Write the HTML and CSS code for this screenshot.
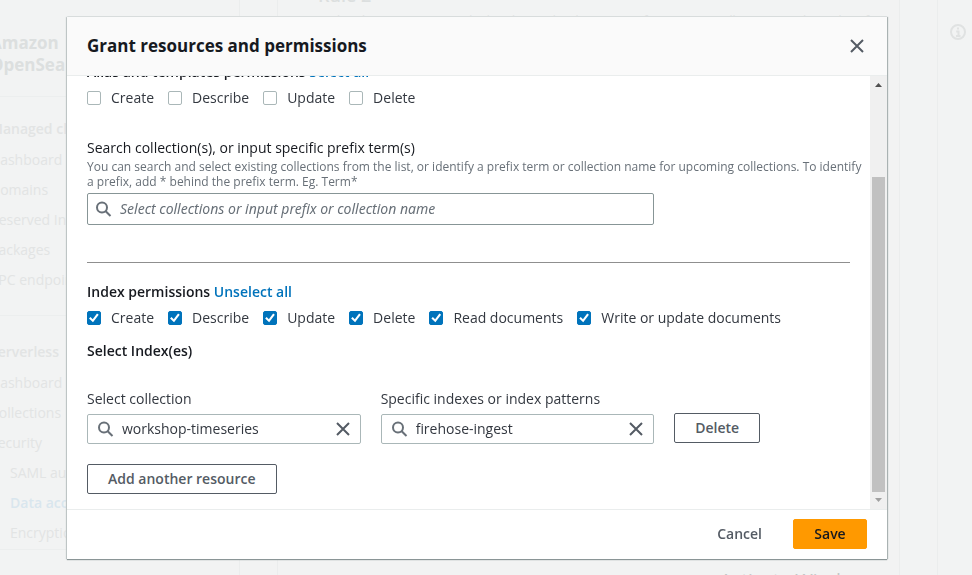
FILE: index.html
```html
<!DOCTYPE html>
<html lang="en">
<head>
<meta charset="utf-8">
<meta name="viewport" content="width=device-width, initial-scale=1">
<title>Grant resources and permissions</title>
<link rel="stylesheet" href="styles.css">
</head>
<body>
<svg class="sprite" aria-hidden="true">
  <symbol id="search" viewBox="0 0 16 16"><circle cx="6" cy="6.500" r="5"/><path d="M9.700 10.200 14.500 15"/></symbol>
  <symbol id="close" viewBox="0 0 16 16"><path d="M2 2l12 12M14 2 2 14"/></symbol>
</svg>

<div class="page" aria-hidden="true">
  <nav class="side">
    <div class="side-title">Amazon<br>OpenSearch</div>
    <div class="side-group">
      <div class="side-heading">Managed clusters</div>
      <div>Dashboard</div>
      <div>Domains</div>
      <div>Reserved Instances</div>
      <div>Packages</div>
      <div>VPC endpoints</div>
    </div>
    <div class="side-group">
      <div class="side-heading">Serverless</div>
      <div>Dashboard</div>
      <div>Collections</div>
      <div>Security</div>
      <div class="side-sub">SAML authentication</div>
      <div class="side-sub side-current">Data access policies</div>
      <div class="side-sub">Encryption policies</div>
    </div>
  </nav>
  <main class="main">
    <div class="rule-title">Rule 2</div>
    <div class="rule-text">Each policy can contain multiple rules. Each rule consists of a resource (collection or index), a list of</div>
    <div class="watermark">Activate Windows</div>
  </main>
  <aside class="help">
    <svg class="info" viewBox="0 0 16 16"><circle cx="8" cy="8" r="7"/><path d="M8 3.500v2M6.200 7.500H8.500V12M6 12h4.500"/></svg>
  </aside>
</div>

<div class="overlay">
  <section class="modal" role="dialog" aria-labelledby="dialog-title">
    <header class="modal-header">
      <h1 id="dialog-title">Grant resources and permissions</h1>
      <button class="icon-button" type="button" aria-label="Close"><svg class="icon"><use href="#close"/></svg></button>
    </header>

    <div class="modal-body">
      <div class="content">
        <h2>Alias and templates permissions <a href="#">Select all</a></h2>
        <div class="checks">
          <label><input type="checkbox">Create</label>
          <label><input type="checkbox">Describe</label>
          <label><input type="checkbox">Update</label>
          <label><input type="checkbox">Delete</label>
        </div>

        <div class="search-field">
          <label for="collections">Search collection(s), or input specific prefix term(s)</label>
          <p>You can search and select existing collections from the list, or identify a prefix term or collection name for upcoming collections. To identify a prefix, add * behind the prefix term. Eg. Term*</p>
          <div class="grid">
            <div class="box box-wide">
              <svg class="icon"><use href="#search"/></svg>
              <input id="collections" type="text" placeholder="Select collections or input prefix or collection name">
            </div>
          </div>
        </div>

        <hr>

        <h2>Index permissions <a href="#">Unselect all</a></h2>
        <div class="checks">
          <label><input type="checkbox" checked>Create</label>
          <label><input type="checkbox" checked>Describe</label>
          <label><input type="checkbox" checked>Update</label>
          <label><input type="checkbox" checked>Delete</label>
          <label><input type="checkbox" checked>Read documents</label>
          <label><input type="checkbox" checked>Write or update documents</label>
        </div>
        <h2 class="indexes">Select Index(es)</h2>

        <div class="grid resource">
          <div class="field">
            <label for="collection">Select collection</label>
            <div class="box">
              <svg class="icon"><use href="#search"/></svg>
              <input id="collection" type="text" value="workshop-timeseries">
              <button class="icon-button" type="button" aria-label="Clear collection"><svg class="icon"><use href="#close"/></svg></button>
            </div>
          </div>
          <div class="field">
            <label for="pattern">Specific indexes or index patterns</label>
            <div class="box">
              <svg class="icon"><use href="#search"/></svg>
              <input id="pattern" type="text" value="firehose-ingest">
              <button class="icon-button" type="button" aria-label="Clear index"><svg class="icon"><use href="#close"/></svg></button>
            </div>
          </div>
          <div class="action"><button class="button" type="button">Delete</button></div>
        </div>
        <button class="button" type="button">Add another resource</button>
      </div>
      <div class="scrollbar" aria-hidden="true">
        <svg class="arrow arrow-up" viewBox="0 0 7 4"><path d="M0 4h7L3.500 0z"/></svg>
        <div class="track"><div class="thumb"></div></div>
        <svg class="arrow" viewBox="0 0 7 4"><path d="M0 0h7L3.500 4z"/></svg>
      </div>
    </div>

    <footer class="modal-footer">
      <button class="button button-link" type="button">Cancel</button>
      <button class="button button-primary" type="button">Save</button>
    </footer>
  </section>
</div>
</body>
</html>
```

FILE: styles.css
```css
* { box-sizing: border-box; }

html, body { height: 100%; }

body {
  margin: 0;
  overflow: hidden;
  background: #f2f3f3;
  color: #16191f;
  font: 14px/22px "Open Sans", "Noto Sans", sans-serif;
}

h1, h2, p { margin: 0; }
button, input { font: inherit; color: inherit; }
a { color: #0073bb; text-decoration: none; }
.sprite { display: none; }

/* Dimmed page behind the dialog */
.page {
  display: grid;
  grid-template-columns: 240px 1fr 35px;
  height: 100vh;
  overflow: hidden;
  color: #e2e4e4;
  white-space: nowrap;
}

.side {
  margin-left: -40px;
  border-right: 1px solid #ebeded;
  overflow: hidden;
}

.side-title {
  padding: 32px 30px 20px;
  border-bottom: 1px solid #eceeee;
  font-size: 17px;
  font-weight: 700;
  color: #dcdfdf;
}

.side-group {
  display: grid;
  gap: 8px;
  padding: 21px 30px 24px;
  border-bottom: 1px solid #eceeee;
}

.side-group + .side-group { padding: 25px 30px 5px; }

.side-heading { margin-bottom: 1px; font-weight: 600; }
.side-sub { padding-left: 20px; }
.side-current { font-weight: 600; color: #d9e6ee; }

.main {
  display: flex;
  flex-direction: column;
  margin: 0 37px;
  padding: 0 40px;
  border: solid #ebeded;
  border-width: 0 1px;
  overflow: hidden;
}

.rule-title { margin-top: -16px; font-size: 18px; font-weight: 600; color: #dcdfdf; }
.rule-text { margin-top: 4px; font-size: 12px; }

.watermark {
  margin: auto -17px -19px auto;
  font-size: 19px;
  line-height: 28px;
  color: #c4c6c6;
}

.help { padding: 24px 0 0 12px; border-left: 1px solid #ebeded; }
.info { width: 16px; height: 16px; fill: none; stroke: #e0e2e2; stroke-width: 2; }

/* Dialog */
.overlay {
  position: fixed;
  inset: 0;
  display: flex;
  padding: 17px 85px 16px 67px;
}

.modal {
  flex: 1;
  display: flex;
  flex-direction: column;
  min-width: 0;
  background: #fff;
  box-shadow: 0 1px 1px #8a9596, 1px 0 1px #b0b8b9, -1px 0 1px #c9cfcf, 0 -1px 0 #e5e8e8;
}

.modal-header {
  display: flex;
  align-items: center;
  justify-content: space-between;
  height: 59px;
  padding: 0 20px;
  background: #fafafa;
  border-bottom: 1px solid #eaeded;
}

h1 { font-size: 17px; line-height: 22px; }
h2 { font-size: 14px; line-height: 22px; font-weight: 600; }

.icon {
  flex: none;
  display: block;
  width: 16px;
  height: 16px;
  fill: none;
  stroke: #545b64;
  stroke-width: 2;
}

.icon-button {
  padding: 0 2px;
  border: 0;
  background: none;
}

.modal-body {
  flex: 1;
  display: flex;
  min-height: 0;
}

.content {
  flex: 1;
  display: flex;
  flex-direction: column;
  align-items: stretch;
  justify-content: flex-end;
  min-width: 0;
  padding: 0 20px 15px;
  overflow: hidden;
}

.content > * { flex: none; }
.content > .button { align-self: flex-start; }

.checks {
  display: flex;
  gap: 14px;
  margin-top: 4px;
  color: #333840;
}

.checks label { display: flex; align-items: center; gap: 10px; }

.checks input {
  appearance: none;
  width: 14px;
  height: 14px;
  margin: 0;
  border: 1px solid #aab7b8;
  border-radius: 2px;
  background: #fff;
}

.checks input:checked {
  display: grid;
  border-color: #0073bb;
  background: #0073bb;
}

.checks input:checked::before {
  content: "";
  place-self: center;
  width: 10px;
  height: 10px;
  background: #fff;
  clip-path: polygon(0 54%, 15% 40%, 37% 63%, 80% 5%, 97% 18%, 40% 93%);
}

.search-field { margin-top: 28px; }
.search-field label { display: block; }

.search-field p {
  margin: 0 -16px 4px 0;
  font-size: 12px;
  line-height: 15px;
  color: #687078;
}

hr {
  width: 100%;
  height: 2px;
  margin: 37px 0 17px;
  border: solid #8f8f8f;
  border-width: 1px 0 0;
}

.indexes { margin-top: 11px; }

.grid {
  display: grid;
  grid-template-columns: repeat(8, 1fr);
  gap: 20px;
}

.resource { margin: 26px 0 20px; }
.field { grid-column: span 3; color: #333840; }
.field label { display: block; margin-bottom: 4px; }
.action { grid-column: span 2; align-self: end; padding-bottom: 1px; }

.box {
  display: flex;
  align-items: center;
  gap: 8px;
  height: 30px;
  padding: 0 7px 0 10px;
  border: 1px solid #aab7b8;
  border-radius: 2px;
  background: #fff;
}

.box-wide {
  grid-column: span 6;
  height: 32px;
  padding-left: 8px;
  border-color: #879596;
}

.box > .icon { stroke: #687078; }

.box input {
  flex: 1;
  min-width: 0;
  padding: 0;
  border: 0;
  outline: 0;
  background: none;
}

.box input::placeholder {
  color: #687078;
  font-family: "Noto Sans", "Open Sans", sans-serif;
  font-style: italic;
  opacity: 1;
}

.button {
  height: 30px;
  padding: 0 20px;
  border: 1px solid #545b64;
  border-radius: 2px;
  background: #fff;
  color: #545b64;
  font-weight: 600;
  line-height: 20px;
}

.action .button { display: block; }
.button-link { border-color: transparent; }
.button-primary { min-width: 74px; border-color: #f90; background: #f90; color: #16191f; }

.scrollbar {
  display: flex;
  flex-direction: column;
  align-items: center;
  width: 17px;
  padding: 7px 0;
  background: #f0f0f0;
}

.track {
  flex: 1;
  display: flex;
  flex-direction: column;
  justify-content: flex-end;
  width: 13px;
  margin: 6px 0;
}

.thumb { height: 79%; background: #c1c1c1; }
.arrow { width: 7px; height: 4px; fill: #a0a0a0; }
.arrow-up { fill: #505050; }

.modal-footer {
  display: flex;
  align-items: center;
  justify-content: flex-end;
  gap: 10px;
  height: 50px;
  padding: 0 20px 2px;
  border-top: 1px solid #eaeded;
}
```
